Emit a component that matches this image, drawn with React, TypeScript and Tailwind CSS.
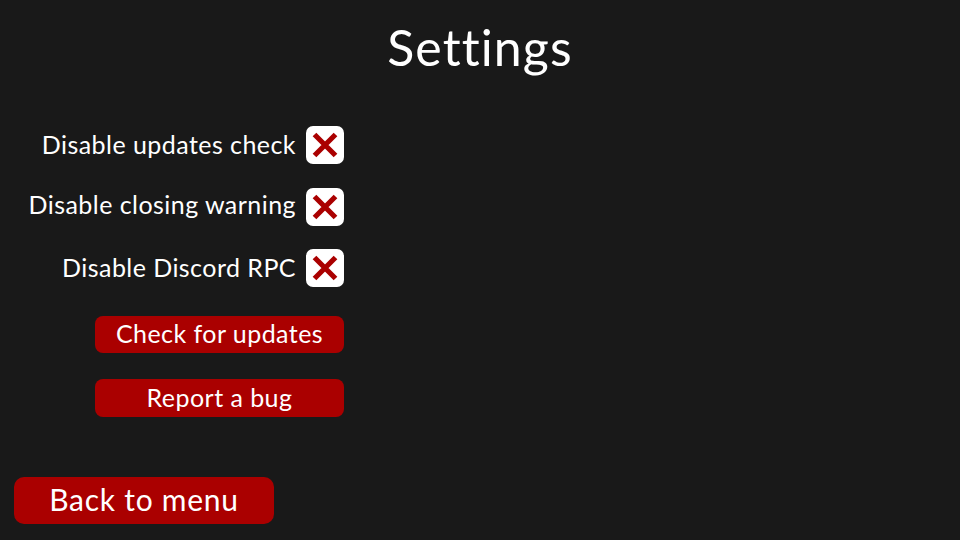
import React from "react";

function XBox() {
  return (
    <div className="w-[38px] h-[38px] bg-white rounded-[7px] flex items-center justify-center shrink-0">
      <svg width="26" height="26" viewBox="0 0 26 26">
        <path d="M2.5 2.5 L23.5 23.5 M23.5 2.5 L2.5 23.5" stroke="#aa0000" strokeWidth="5.2" strokeLinecap="butt" />
      </svg>
    </div>
  );
}

function Row({ label, className = "", textClass = "" }: { label: string; className?: string; textClass?: string }) {
  return (
    <div className={"flex items-center gap-[10px] h-[38px] " + className}>
      <span className={"text-white text-[25px] leading-none tracking-[0.45px] " + textClass}>{label}</span>
      <XBox />
    </div>
  );
}

export default function App() {
  return (
    <div
      className="w-[960px] h-[540px] bg-[#191919] flex flex-col relative overflow-hidden [font-variant-ligatures:none]"
      style={{ fontFamily: "Lato, 'Noto Sans', sans-serif" }}
    >
      <h1 className="text-white text-[50px] leading-none tracking-[1.1px] text-center pt-[22px] h-[94px]">Settings</h1>
      <div className="w-[344px] flex flex-col items-end pt-[32px]">
        <Row label="Disable updates check" textClass="pb-[2px]" />
        <Row label="Disable closing warning" className="mt-[24px]" textClass="pb-[6px]" />
        <Row label="Disable Discord RPC" className="mt-[23px]" textClass="pb-[2px]" />
        <div className="flex flex-col gap-[26px] mt-[29px]">
          <button className="w-[249px] h-[37px] bg-[#aa0000] rounded-[8px] text-white text-[25px] leading-none tracking-[0.45px] pb-[2px]">
            Check for updates
          </button>
          <button className="w-[249px] h-[38px] bg-[#aa0000] rounded-[8px] text-white text-[25px] leading-none tracking-[0.45px] pb-[2px]">
            Report a bug
          </button>
        </div>
      </div>
      <div className="mt-auto pl-[14px] pb-[16px]">
        <button className="w-[260px] h-[47px] bg-[#aa0000] rounded-[10px] text-white text-[30px] leading-none tracking-[0.75px] pb-[3px]">
          Back to menu
        </button>
      </div>
    </div>
  );
}
